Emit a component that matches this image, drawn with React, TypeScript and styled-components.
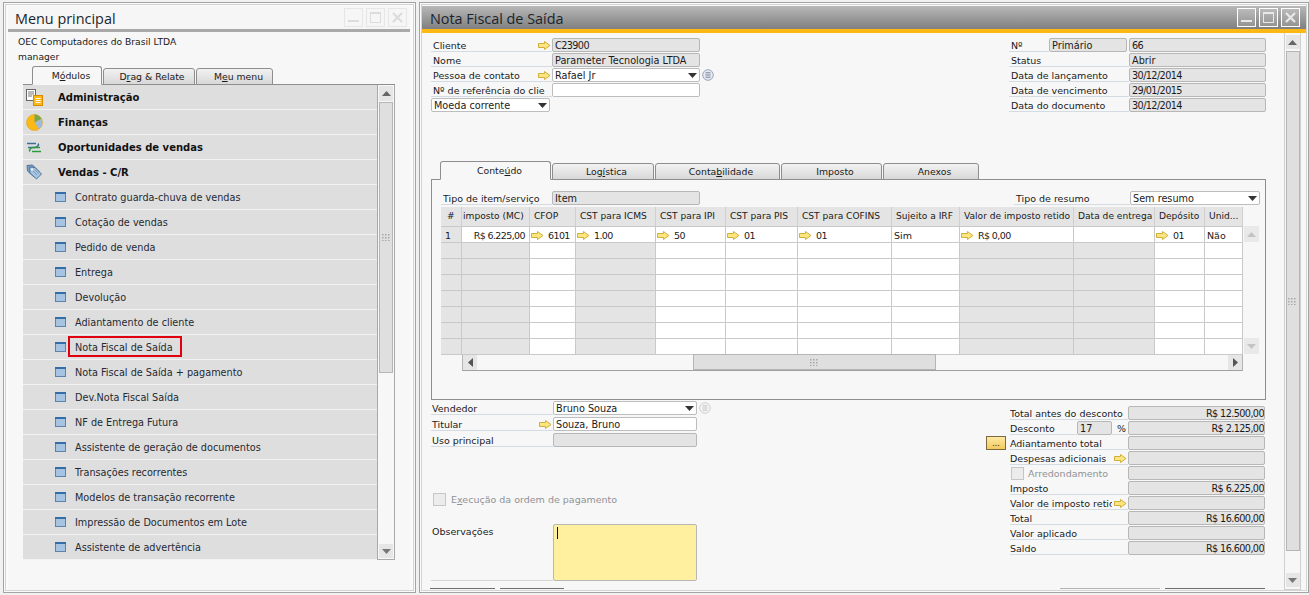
import React from "react";
import styled, { createGlobalStyle } from "styled-components";

const Global = createGlobalStyle`
  html, body { margin: 0; padding: 0; background: #f1f1f1; }
  body { font-family: "DejaVu Sans", Verdana, sans-serif; font-size: 10px; color: #1a1a1a; overflow: hidden; }
  u { text-decoration-thickness: 1px; text-underline-offset: 1px; }
`;

const Page = styled.div`
  width: 1309px; height: 595px; box-sizing: border-box; padding: 2px 0 0 3px;
  display: flex; gap: 3px; overflow: hidden; background: #f1f1f1;
`;
const Win = styled.section<{ $w: number }>`
  width: ${p => p.$w}px; flex: none; height: 591px; box-sizing: border-box;
  border: 1px solid #a3a3a3; padding: 3px 2px 2px 1px; display: flex; flex-direction: column; background: #fafafa; overflow: hidden;
  outline: 1px solid #d4d4d4; outline-offset: -3px;
`;
const TitleBar = styled.header<{ $active?: boolean }>`
  height: 23px; flex: none; display: flex; align-items: center; justify-content: space-between;
  padding: 0 ${p => (p.$active ? 6 : 3)}px 0 ${p => (p.$active ? 9 : 7)}px; margin-left: ${p => (p.$active ? 0 : 3)}px; margin-right: ${p => (p.$active ? 0 : 3)}px;
  background: ${p => (p.$active ? "linear-gradient(#b8b8b8,#7f7f7f)" : "#f6f6f6")};
  border-bottom: ${p => (p.$active ? "4px solid #fdb813" : "3px solid #a9a9a9")};
`;
const TitleText = styled.h1`
  margin: 0; padding-top: 2px; font-family: "Open Sans", "Noto Sans", sans-serif; font-weight: 400; font-size: 14.4px; color: #1a252d;
`;
const WinBtns = styled.div`display: flex; gap: 3px;`;
const WinBtn = styled.button<{ $active?: boolean }>`
  width: 19px; height: 19px; padding: 0; display: flex; align-items: center; justify-content: center;
  border: 1px solid ${p => (p.$active ? "#fff" : "#e6e6e6")}; background: ${p => (p.$active ? "rgba(255,255,255,.12)" : "#f6f6f6")};
`;

const Body = styled.div`
  flex: 1; min-height: 0; background: #f7f7f7; margin: 0 3px; display: flex; flex-direction: column; padding-left: 7px;
`;
const Company = styled.div`height: 15px; line-height: 15px; font-size: 9.2px; padding-left: 3px;`;
const Gap = styled.div`height: 2px; flex: none;`;
const TabRow = styled.div<{ $left: number }>`display: flex; padding-left: ${p => p.$left}px; align-items: flex-end; position: relative; z-index: 1;`;
const Tab = styled.div<{ $w: number; $on?: boolean; $h: number; $shift: number }>`
  width: ${p => p.$w}px; height: ${p => p.$h}px; box-sizing: border-box; flex: none; text-align: center; padding-left: ${p => p.$shift}px;
  line-height: ${p => p.$h - 1}px; font-size: 9.3px; margin-right: 1px;
  border: 1px solid #8e8e8e; border-radius: 3px 3px 0 0;
  border-bottom: ${p => (p.$on ? "1px solid #f7f7f7" : "1px solid #8e8e8e")};
  background: ${p => (p.$on ? "#f7f7f7" : "linear-gradient(#f2f2f2,#d8d8d8)")};
`;
const MenuFrame = styled.div`
  display: flex; width: 372px; height: 476px; margin-left: 8px; border-top: 1px solid #8e8e8e; margin-top: -1px; box-sizing: border-box;
`;
const MenuList = styled.ul`list-style: none; margin: 0; padding: 0; width: 354px; flex: none;`;
const MenuRow = styled.li<{ $head?: boolean }>`
  height: 25px; box-sizing: border-box; display: flex; align-items: center; background: #dedede; border-bottom: 1px solid #f2f2f2;
  padding-left: ${p => (p.$head ? 3 : 32)}px; font-weight: ${p => (p.$head ? 700 : 400)}; font-size: ${p => (p.$head ? 10 : 9.7)}px; color: ${p => (p.$head ? "#111" : "#1f2a33")};
`;
const MenuIconBox = styled.span<{ $head?: boolean }>`
  width: ${p => (p.$head ? 32 : 20)}px; flex: none; display: flex; align-items: center;
`;
const MenuText = styled.span<{ $sel?: boolean }>`
  height: 21px; line-height: 19px; box-sizing: border-box;
  ${p => p.$sel ? "border: 2px solid #e0000f; padding: 0 7px 0 5px; margin: 0 0 2px -7px;" : "padding-top: 1px;"}
`;
const VScroll = styled.div<{ $w: number; $framed?: boolean; $h?: number; $ml?: number; $side?: boolean }>`
  width: ${p => p.$w}px; flex: none; box-sizing: border-box; display: flex; flex-direction: column; align-items: center; background: #f7f7f7;
  ${p => p.$framed ? "border: 1px solid #a9a9a9; border-top: none;" : ""}
  ${p => p.$side ? "border: 1px solid #cfcfcf; border-top: none;" : ""}
  ${p => p.$h ? `height: ${p.$h}px;` : ""}
  margin-left: ${p => p.$ml ?? 0}px;
`;
const ScrollBtn = styled.div<{ $h: number; $w: number; $shade?: string; $my?: number; $mb?: number }>`
  height: ${p => p.$h}px; width: ${p => p.$w}px; flex: none; display: flex; align-items: center; justify-content: center; background: ${p => p.$shade || "#e6e6e6"};
  margin: ${p => p.$my ?? 0}px 0 ${p => p.$mb ?? p.$my ?? 0}px;
`;
const Thumb = styled.div<{ $h?: number; $w: number }>`
  width: ${p => p.$w}px; box-sizing: border-box; border: 1px solid #b5b5b5; background: #dfdfdf; flex: none; height: ${p => p.$h}px;
  display: flex; align-items: center; justify-content: center;
`;
const Spring = styled.div`flex: 1;`;

const Main = styled.div`flex: 1; min-height: 0; display: flex; background: #f7f7f7; overflow: hidden;`;
const Form = styled.div`width: 835px; flex: none; margin-left: 10px; padding-top: 5px; box-sizing: border-box;`;
const TopBlock = styled.div`display: flex; justify-content: space-between; height: 74px;`;
const Col = styled.div`display: flex; flex-direction: column;`;
const Row = styled.div<{ $gap?: number }>`display: flex; height: 14px; margin-bottom: ${p => p.$gap ?? 1}px; align-items: stretch;`;
const Label = styled.label<{ $w: number; $plain?: boolean; $pad?: number; $ml?: number }>`
  width: ${p => p.$w}px; flex: none; box-sizing: border-box; display: flex; align-items: center; justify-content: space-between;
  padding: 1px 0 0 ${p => p.$pad ?? 2}px; margin-left: ${p => p.$ml ?? 0}px; line-height: 13px; white-space: nowrap; overflow: hidden; font-size: 9.5px;
  ${p => (p.$plain ? "" : "border-bottom: 1px solid #d3dbe3;")}
`;
const LabelText = styled.span`flex: 1; min-width: 0; overflow: hidden; margin-right: 2px;`;
const Field = styled.div<{ $w: number; $kind?: "ro" | "edit"; $right?: boolean; $mr?: number; $num?: boolean }>`
  width: ${p => p.$w}px; flex: none; box-sizing: border-box; height: 14px; line-height: 12px; padding: 1px ${p => (p.$right ? 0 : 2)}px 0 2px; font-size: 9.7px;
  margin-right: ${p => p.$mr ?? 0}px; white-space: nowrap; overflow: hidden;
  border: 1px solid ${p => (p.$kind === "edit" ? "#bdbdbd" : "#b7b7b7")}; border-radius: 2px;
  background: ${p => (p.$kind === "edit" ? "#fff" : "#e4e4e4")};
  letter-spacing: ${p => (p.$num ? "-0.6px" : "0")};
  display: flex; justify-content: ${p => (p.$right ? "flex-end" : "space-between")}; align-items: center;
`;
const Info = styled.span`display: inline-flex; margin: 1px 0 0 2px;`;

const TabsWrap = styled.div`margin-top: 49px;`;
const Panel = styled.div`
  width: 835px; height: 221px; box-sizing: border-box; border: 1px solid #8e8e8e; margin-top: -1px; padding: 11px 0 0 9px;
`;
const PanelHead = styled.div`display: flex; height: 14px; margin-bottom: 2px;`;
const GridHead = styled.div`display: flex; height: 19px;`;
const HeadCell = styled.div<{ $w: number; $pad: number }>`
  width: ${p => p.$w}px; flex: none; box-sizing: border-box; background: #e4e4e4; border-right: 1px solid #cfcfcf; padding-left: ${p => p.$pad}px;
  line-height: 18px; font-size: 9.1px; white-space: nowrap; overflow: hidden;
`;
const GridBody = styled.div`display: flex; height: 128px;`;
const Rows = styled.div`width: 802px; flex: none; border-top: 1px solid #c9c9c9; box-sizing: border-box;`;
const GridRow = styled.div`display: flex; height: 16px; box-sizing: border-box; border-bottom: 1px solid #c9c9c9;`;
const Cell = styled.div<{ $w: number; $grey?: boolean; $right?: boolean; $num?: boolean; $pad?: number }>`
  width: ${p => p.$w}px; flex: none; box-sizing: border-box; border-right: 1px solid #c9c9c9; background: ${p => (p.$grey ? "#e4e4e4" : "#fff")};
  display: flex; align-items: center; justify-content: ${p => (p.$right ? "flex-end" : "flex-start")}; padding: 1px ${p => (p.$right ? 4 : 2)}px 0 ${p => p.$pad ?? 1}px; gap: 4px; font-size: 9.5px; white-space: nowrap; overflow: hidden;
  letter-spacing: ${p => (p.$num ? "-0.6px" : "0")};
`;
const HScroll = styled.div`
  margin-left: 21px; width: 781px; height: 17px; box-sizing: border-box; border-bottom: 1px solid #a0a0a0; border-left: 1px solid #b5b5b5; border-right: 1px solid #b5b5b5; display: flex; align-items: center;
`;
const HTrack = styled.div`flex: 1; display: flex; padding-left: 216px; height: 16px;`;

const Lower = styled.div`display: flex; justify-content: space-between; height: 181px; width: 835px;`;
const LowerLeft = styled.div`padding-top: 1px;`;
const LowerRight = styled.div`padding-top: 6px; width: 280px;`;
const Disabled = styled.div`display: flex; align-items: center; gap: 5px; color: #8f9296; height: 14px; font-size: 9.5px; margin: 45px 0 18px 2px;`;
const Check = styled.span`width: 13px; height: 13px; box-sizing: border-box; border: 1px solid #c6c6c6; background: #ececec; flex: none;`;
const NoteRow = styled.div`display: flex; height: 57px;`;
const NoteLabel = styled.label`
  width: 122px; box-sizing: border-box; padding: 2px 0 0 1px; border-bottom: 1px solid #d5d5d5; font-size: 9.5px;
`;
const Note = styled.div`
  width: 144px; height: 57px; box-sizing: border-box; background: #fff0a0; border: 1px solid #b7b7b7; border-radius: 2px; padding: 2px 3px;
`;
const Caret = styled.span`display: block; width: 1px; height: 12px; background: #0a0a50;`;
const DotsBtn = styled.button`
  width: 20px; height: 14px; flex: none; padding: 0; margin-right: 4px; box-sizing: border-box; border: 1px solid #7a6a40; background: linear-gradient(#fde9a5,#f5c95a);
  font: 400 8px "DejaVu Sans", sans-serif; line-height: 9px; color: #222;
`;
const Spacer = styled.span`width: 24px; flex: none;`;
const Clipped = styled.div`display: flex; justify-content: space-between; width: 835px; margin-top: 7px; margin-left: -1px;`;
const EdgeGroup = styled.div`display: flex; gap: 5px;`;
const Edge = styled.span<{ $w: number; $light?: boolean }>`
  display: block; width: ${p => p.$w}px; height: 1px; background: ${p => (p.$light ? "#b4b4b4" : "#6d6d6d")};
`;
const CheckInline = styled.span`display: flex; align-items: center; gap: 4px; color: #8f9296; padding-left: 1px; height: 14px;`;
const ArrowSlot = styled.span`display: inline-flex; flex: none; margin-right: 1px;`;

const Arrow = () => (
  <svg width="13" height="9" viewBox="0 0 13 9">
    <path d="M.5 2.500H6.500V.5L12 4.500 6.500 8.500V6.500H.5Z" fill="#fbe67f" stroke="#d1ae3c" strokeWidth="1" />
  </svg>
);
const Tri = ({ dir = "down", c = "#333" }: { dir?: "down" | "up" | "left" | "right"; c?: string }) => {
  const d = { down: "M0 1H9L4.5 6Z", up: "M0 6H9L4.5 1Z", left: "M6 0V9L1 4.5Z", right: "M1 0V9L6 4.5Z" }[dir];
  const horizontal = dir === "left" || dir === "right";
  return <svg width={horizontal ? 7 : 9} height={horizontal ? 9 : 7} viewBox={horizontal ? "0 0 7 9" : "0 0 9 7"}><path d={d} fill={c} /></svg>;
};
const InfoIcon = ({ faded }: { faded?: boolean }) => (
  <svg width="12" height="12" viewBox="0 0 12 12">
    <circle cx="6" cy="6" r="5.3" fill={faded ? "#f4f4f4" : "#e5e9f2"} stroke={faded ? "#cfcfcf" : "#9aa4bc"} />
    <path d="M3.5 3.8h5M3.5 6h5M3.5 8.2h5" stroke={faded ? "#bbb" : "#6d7690"} strokeWidth=".9" />
  </svg>
);
const WindowIcon = () => (
  <svg width="11" height="10" viewBox="0 0 11 10">
    <rect x=".5" y=".5" width="10" height="9" fill="#a6c3e2" stroke="#5d83ab" />
    <rect x="0" y="0" width="11" height="2" fill="#336ea8" />
  </svg>
);
const DocIcon = () => (
  <svg width="17" height="17" viewBox="0 0 17 17">
    <rect x=".5" y=".5" width="9" height="11" fill="#fff" stroke="#666" />
    <path d="M2 3h6M2 5h6M2 7h4" stroke="#777" />
    <rect x="7.5" y="6.5" width="9" height="10" fill="#fdb913" stroke="#d98a00" />
    <path d="M9.5 9.5h5M9.5 11.5h5M9.5 13.5h5" stroke="#fff" />
  </svg>
);
const PieIcon = () => (
  <svg width="17" height="17" viewBox="0 0 17 17">
    <circle cx="8.5" cy="8.5" r="8" fill="#fdb913" stroke="#e0a020" strokeWidth=".6" />
    <path d="M8.5 8.5V.5A8 8 0 0 1 15.5 5Z" fill="#79a84a" />
    <path d="M8.5 8.5L15.5 5A8 8 0 0 1 13 15Z" fill="#9dbcdc" />
  </svg>
);
const ExchangeIcon = () => (
  <svg width="16" height="13" viewBox="0 0 16 13" fill="none">
    <path d="M1 2.500H10M12 2.500C13.500 4 11 6.500 9 6.500H2" stroke="#3a6f9a" strokeWidth="1.6" />
    <path d="M15 10.500H6M4 10.500C2.500 9 5 6.500 7 6.500H14" stroke="#2d9a3f" strokeWidth="1.6" />
  </svg>
);
const TagIcon = () => (
  <svg width="16" height="16" viewBox="0 0 16 16">
    <path d="M1 1.500L6.500 1 13 7.500 8 13 1.500 7Z" fill="#7fa3c7" stroke="#4f7598" />
    <path d="M3.500 3L9 3.500 15.500 10 10.500 15 4 9Z" fill="#a9c4de" stroke="#4f7598" />
    <path d="M7 7l4 4M8.500 5.500l4 4" stroke="#6d90b2" strokeWidth=".8" />
    <circle cx="6" cy="5.500" r="1" fill="#fff" />
  </svg>
);
const Minimize = ({ c }: { c: string }) => <svg width="11" height="11" viewBox="0 0 11 11"><rect x="0" y="8" width="11" height="2" fill={c} /></svg>;
const Maximize = ({ c }: { c: string }) => <svg width="11" height="11" viewBox="0 0 11 11"><rect x=".5" y=".5" width="10" height="10" fill="none" stroke={c} /><rect x="0" y="0" width="11" height="2" fill={c} /></svg>;
const CloseIcon = ({ c }: { c: string }) => <svg width="11" height="11" viewBox="0 0 11 11"><path d="M1 1L10 10M10 1L1 10" stroke={c} strokeWidth="2.2" /></svg>;
const Grip = () => (
  <svg width="9" height="7" viewBox="0 0 9 7" fill="#a8a8a8">
    {[0, 3, 6].map(x => [0, 3, 6].map(y => <rect key={`${x}-${y}`} x={x} y={y} width="1.500" height="1.500" />))}
  </svg>
);

const heads: [React.ReactNode, string][] = [
  [<DocIcon />, "Administração"], [<PieIcon />, "Finanças"], [<ExchangeIcon />, "Oportunidades de vendas"], [<TagIcon />, "Vendas - C/R"],
];
const items = [
  "Contrato guarda-chuva de vendas", "Cotação de vendas", "Pedido de venda", "Entrega", "Devolução", "Adiantamento de cliente", "Nota Fiscal de Saída",
  "Nota Fiscal de Saída + pagamento", "Dev.Nota Fiscal Saída", "NF de Entrega Futura", "Assistente de geração de documentos", "Transações recorrentes",
  "Modelos de transação recorrente", "Impressão de Documentos em Lote", "Assistente de advertência",
];
const cols = [21, 68, 46, 80, 70, 72, 94, 68, 114, 81, 50, 38];
const colHeads = ["#", "imposto (MC)", "CFOP", "CST para ICMS", "CST para IPI", "CST para PIS", "CST para COFINS", "Sujeito a IRF", "Valor de imposto retido", "Data de entrega", "Depósito", "Unid..."];
const colPad = [6, 1, 4, 4, 4, 4, 4, 4, 4, 4, 4, 4];
const greyCols = [0, 1, 3, 8, 9];

const WinControls = ({ active }: { active?: boolean }) => {
  const c = active ? "#e8e8e8" : "#dcdcdc";
  return (
    <WinBtns>
      <WinBtn $active={active} aria-label="Minimizar"><Minimize c={c} /></WinBtn>
      <WinBtn $active={active} aria-label="Maximizar"><Maximize c={c} /></WinBtn>
      <WinBtn $active={active} aria-label="Fechar"><CloseIcon c={c} /></WinBtn>
    </WinBtns>
  );
};

const FieldRow = ({ label, value, arrow, edit, drop, info, num }: { label: string; value?: string; arrow?: boolean; edit?: boolean; drop?: boolean; info?: boolean; num?: boolean }) => (
  <Row>
    <Label $w={121}><LabelText>{label}</LabelText>{arrow && <ArrowSlot><Arrow /></ArrowSlot>}</Label>
    <Field $w={148} $kind={edit ? "edit" : "ro"} $num={num}>{value}{drop && <Tri />}</Field>
    {info && <Info><InfoIcon /></Info>}
  </Row>
);
const DocRow = ({ label, value, children }: { label: string; value: string; children?: React.ReactNode }) => (
  <Row>
    {children ?? <Label $w={120}><LabelText>{label}</LabelText></Label>}
    <Field $w={137} $num={/\d/.test(value)}>{value}</Field>
  </Row>
);
const TotalRow = ({ label, value, arrow, btn, labelNode }: { label?: string; value?: string; arrow?: boolean; btn?: boolean; labelNode?: React.ReactNode }) => (
  <Row>
    {btn ? <DotsBtn>...</DotsBtn> : <Spacer />}
    {labelNode ?? <Label $w={118} $pad={0}><LabelText>{label}</LabelText>{arrow && <ArrowSlot><Arrow /></ArrowSlot>}</Label>}
    <Field $w={137} $right $num>{value}</Field>
  </Row>
);

export default function App() {
  return (
    <Page>
      <Global />
      <Win $w={413}>
        <TitleBar>
          <TitleText>Menu principal</TitleText>
          <WinControls />
        </TitleBar>
        <Body>
          <Gap />
          <Company>OEC Computadores do Brasil LTDA</Company>
          <Company>manager</Company>
          <Gap />
          <TabRow $left={17}>
            <Tab $w={70} $h={19} $shift={8} $on>M<u>ó</u>dulos</Tab>
            <Tab $w={92} $h={17} $shift={6}>D<u>r</u>ag &amp; Relate</Tab>
            <Tab $w={77} $h={17} $shift={8}>M<u>e</u>u menu</Tab>
          </TabRow>
          <MenuFrame>
            <MenuList>
              {heads.map(([icon, t]) => (
                <MenuRow $head key={t}><MenuIconBox $head>{icon}</MenuIconBox><MenuText>{t}</MenuText></MenuRow>
              ))}
              {items.map(t => (
                <MenuRow key={t}>
                  <MenuIconBox><WindowIcon /></MenuIconBox>
                  <MenuText $sel={t === "Nota Fiscal de Saída"}>{t}</MenuText>
                </MenuRow>
              ))}
            </MenuList>
            <VScroll $w={18} $framed>
              <ScrollBtn $h={15} $w={14} $my={1}><Tri dir="up" c="#666" /></ScrollBtn>
              <Thumb $w={14} $h={271}><Grip /></Thumb>
              <Spring />
              <ScrollBtn $h={14} $w={14} $mb={1}><Tri c="#777" /></ScrollBtn>
            </VScroll>
          </MenuFrame>
        </Body>
      </Win>

      <Win $w={890}>
        <TitleBar $active>
          <TitleText>Nota Fiscal de Saída</TitleText>
          <WinControls active />
        </TitleBar>
        <Main>
          <Form>
            <TopBlock>
              <Col>
                <FieldRow label="Cliente" value="C23900" arrow num />
                <FieldRow label="Nome" value="Parameter Tecnologia LTDA" />
                <FieldRow label="Pessoa de contato" value="Rafael Jr" arrow edit drop info />
                <FieldRow label="Nº de referência do clie" edit />
                <Row><Field $w={119} $kind="edit">Moeda corrente<Tri /></Field></Row>
              </Col>
              <Col>
                <DocRow label="Nº" value="66">
                  <Label $w={40}>Nº</Label>
                  <Field $w={78} $mr={2}>Primário</Field>
                </DocRow>
                <DocRow label="Status" value="Abrir" />
                <DocRow label="Data de lançamento" value="30/12/2014" />
                <DocRow label="Data de vencimento" value="29/01/2015" />
                <DocRow label="Data do documento" value="30/12/2014" />
              </Col>
            </TopBlock>
            <TabsWrap>
              <TabRow $left={9}>
                <Tab $w={111} $h={19} $shift={8} $on>Conte<u>ú</u>do</Tab>
                <Tab $w={102} $h={17} $shift={7}>Log<u>í</u>stica</Tab>
                <Tab $w={125} $h={17} $shift={7}>Conta<u>b</u>ilidade</Tab>
                <Tab $w={101} $h={17} $shift={7}>Imposto</Tab>
                <Tab $w={96} $h={17} $shift={7}>Anexos</Tab>
              </TabRow>
              <Panel>
                <PanelHead>
                  <Label $w={111}><LabelText>Tipo de item/serviço</LabelText></Label>
                  <Field $w={148}>Item</Field>
                  <Label $w={116} $ml={314}>Tipo de resumo</Label>
                  <Field $w={130} $kind="edit">Sem resumo<Tri /></Field>
                </PanelHead>
                <GridHead>
                  {colHeads.map((h, i) => <HeadCell key={h} $w={cols[i]} $pad={colPad[i]}>{h}</HeadCell>)}
                </GridHead>
                <GridBody>
                  <Rows>
                    <GridRow>
                      <Cell $w={cols[0]} $grey $pad={4}>1</Cell>
                      <Cell $w={cols[1]} $right $num>R$ 6.225,00</Cell>
                      <Cell $w={cols[2]} $num><Arrow />6101</Cell>
                      <Cell $w={cols[3]} $num><Arrow />1.00</Cell>
                      <Cell $w={cols[4]} $num><Arrow />50</Cell>
                      <Cell $w={cols[5]} $num><Arrow />01</Cell>
                      <Cell $w={cols[6]} $num><Arrow />01</Cell>
                      <Cell $w={cols[7]} $pad={2}>Sim</Cell>
                      <Cell $w={cols[8]} $num><Arrow />R$ 0,00</Cell>
                      <Cell $w={cols[9]} />
                      <Cell $w={cols[10]} $num><Arrow />01</Cell>
                      <Cell $w={cols[11]} $pad={2}>Não</Cell>
                    </GridRow>
                    {[2, 3, 4, 5, 6, 7, 8].map(r => (
                      <GridRow key={r}>
                        {cols.map((w, i) => <Cell key={i} $w={w} $grey={greyCols.includes(i)} />)}
                      </GridRow>
                    ))}
                  </Rows>
                  <VScroll $w={16}>
                    <ScrollBtn $h={16} $w={15} $shade="#e9e9e9"><Tri dir="up" c="#c4c4c4" /></ScrollBtn>
                    <Spring />
                    <ScrollBtn $h={16} $w={15} $shade="#e9e9e9"><Tri c="#c4c4c4" /></ScrollBtn>
                  </VScroll>
                </GridBody>
                <HScroll>
                  <ScrollBtn $h={15} $w={14}><Tri dir="left" c="#555" /></ScrollBtn>
                  <HTrack><Thumb $w={243} $h={16}><Grip /></Thumb></HTrack>
                  <ScrollBtn $h={15} $w={14}><Tri dir="right" c="#555" /></ScrollBtn>
                </HScroll>
              </Panel>
            </TabsWrap>
            <Lower>
              <LowerLeft>
                <Row $gap={2}>
                  <Label $w={122} $pad={1}>Vendedor</Label>
                  <Field $w={144} $kind="edit">Bruno Souza<Tri /></Field>
                  <Info><InfoIcon faded /></Info>
                </Row>
                <Row $gap={2}>
                  <Label $w={122} $pad={1}>Titular<ArrowSlot><Arrow /></ArrowSlot></Label>
                  <Field $w={144} $kind="edit">Souza, Bruno</Field>
                </Row>
                <Row $gap={2}>
                  <Label $w={122} $pad={1}>Uso principal</Label>
                  <Field $w={144} />
                </Row>
                <Disabled><Check /><span>E<u>x</u>ecução da ordem de pagamento</span></Disabled>
                <NoteRow>
                  <NoteLabel>Observações</NoteLabel>
                  <Note><Caret /></Note>
                </NoteRow>
              </LowerLeft>
              <LowerRight>
                <TotalRow label="Total antes do desconto" value="R$ 12.500,00" />
                <Row>
                  <Spacer />
                  <Label $w={67} $pad={0}>Desconto</Label>
                  <Field $w={35}>17</Field>
                  <Label $w={16}>&nbsp;%</Label>
                  <Field $w={137} $right $num>R$ 2.125,00</Field>
                </Row>
                <TotalRow label="Adiantamento total" btn />
                <TotalRow label="Despesas adicionais" arrow />
                <TotalRow labelNode={<Label $w={118} $plain $pad={0}><CheckInline><Check />Arredondamento</CheckInline></Label>} />
                <TotalRow label="Imposto" value="R$ 6.225,00" />
                <TotalRow label="Valor de imposto retido" arrow />
                <TotalRow label="Total" value="R$ 16.600,00" />
                <TotalRow label="Valor aplicado" />
                <TotalRow label="Saldo" value="R$ 16.600,00" />
              </LowerRight>
            </Lower>
            <Clipped>
              <EdgeGroup><Edge $w={65} /><Edge $w={64} /></EdgeGroup>
              <EdgeGroup><Edge $w={100} $light /><Edge $w={100} /></EdgeGroup>
            </Clipped>
          </Form>
          <VScroll $w={17} $side $h={557} $ml={18}>
            <ScrollBtn $h={14} $w={14} $my={2}><Tri dir="up" c="#666" /></ScrollBtn>
            <Thumb $w={14} $h={500}><Grip /></Thumb>
            <Spring />
            <ScrollBtn $h={14} $w={14} $mb={2}><Tri c="#777" /></ScrollBtn>
          </VScroll>
        </Main>
      </Win>
    </Page>
  );
}
